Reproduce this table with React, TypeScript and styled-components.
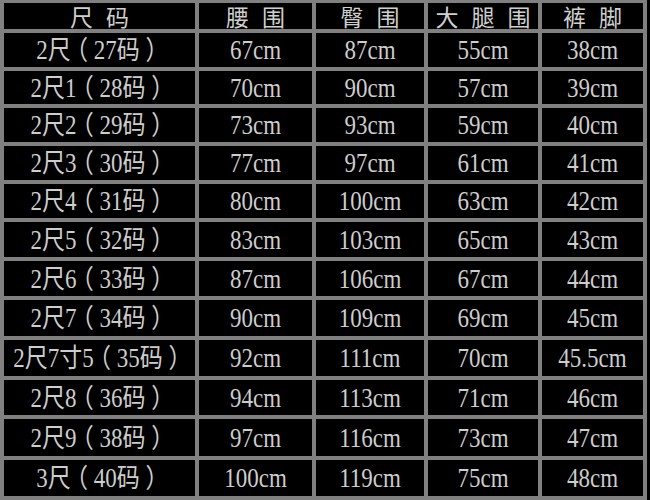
import React from 'react';
import styled, { createGlobalStyle } from 'styled-components';

const GlobalStyle = createGlobalStyle`
  html,
  body {
    margin: 0;
    padding: 0;
    background: #000;
  }
`;

const Page = styled.div`
  width: 650px;
  height: 500px;
  background: #000;
  overflow: hidden;
`;

const Table = styled.div`
  display: grid;
  grid-template-columns: 191px 113px 108px 110px 101px;
  grid-template-rows: 26px 34px 33px 34px 34px 34px 35px 35px 36px 36px 35px 37px 36px;
  gap: 4px;
  padding: 3px 4px 4px 4px;
  width: 647px;
  box-sizing: border-box;
  background: #808080;
`;

const HeaderCell = styled.div`
  display: flex;
  align-items: center;
  justify-content: center;
  background: #000;
  color: #cfcfcf;
  font-family: 'Noto Sans CJK SC', sans-serif;
  font-size: 23px;
  line-height: 1;
  letter-spacing: 13px;
  text-indent: 13px;
  white-space: nowrap;
`;

const Cell = styled.div`
  display: flex;
  align-items: center;
  justify-content: center;
  background: #000;
  color: #cdcdcd;
  font-family: 'Liberation Serif', 'Noto Sans CJK SC', serif;
  font-size: 23px;
  line-height: 1;
  white-space: nowrap;
  padding-top: 1px;
`;

const CellText = styled.span`
  display: inline-block;
  transform: scaleY(1.15);
`;

const Paren = styled.span`
  display: inline-block;
  width: 1em;
  text-align: center;
  font-feature-settings: 'halt';
`;

const headers = ['尺码', '腰围', '臀围', '大腿围', '裤脚'];

const rows: string[][] = [
  ['2尺（27码）', '67cm', '87cm', '55cm', '38cm'],
  ['2尺1（28码）', '70cm', '90cm', '57cm', '39cm'],
  ['2尺2（29码）', '73cm', '93cm', '59cm', '40cm'],
  ['2尺3（30码）', '77cm', '97cm', '61cm', '41cm'],
  ['2尺4（31码）', '80cm', '100cm', '63cm', '42cm'],
  ['2尺5（32码）', '83cm', '103cm', '65cm', '43cm'],
  ['2尺6（33码）', '87cm', '106cm', '67cm', '44cm'],
  ['2尺7（34码）', '90cm', '109cm', '69cm', '45cm'],
  ['2尺7寸5（35码）', '92cm', '111cm', '70cm', '45.5cm'],
  ['2尺8（36码）', '94cm', '113cm', '71cm', '46cm'],
  ['2尺9（38码）', '97cm', '116cm', '73cm', '47cm'],
  ['3尺（40码）', '100cm', '119cm', '75cm', '48cm'],
];

// full-width parens are drawn centred in their em box, as in the source chart
const renderText = (value: string) =>
  value
    .split(/([（）])/)
    .filter(Boolean)
    .map((part, k) =>
      part === '（' || part === '）' ? <Paren key={k}>{part}</Paren> : part,
    );

export default function App() {
  return (
    <Page>
      <GlobalStyle />
      <Table>
        {headers.map((h) => (
          <HeaderCell key={h}>{h}</HeaderCell>
        ))}
        {rows.map((row, i) =>
          row.map((value, j) => (
            <Cell key={`${i}-${j}`}>
              <CellText>{renderText(value)}</CellText>
            </Cell>
          )),
        )}
      </Table>
    </Page>
  );
}
